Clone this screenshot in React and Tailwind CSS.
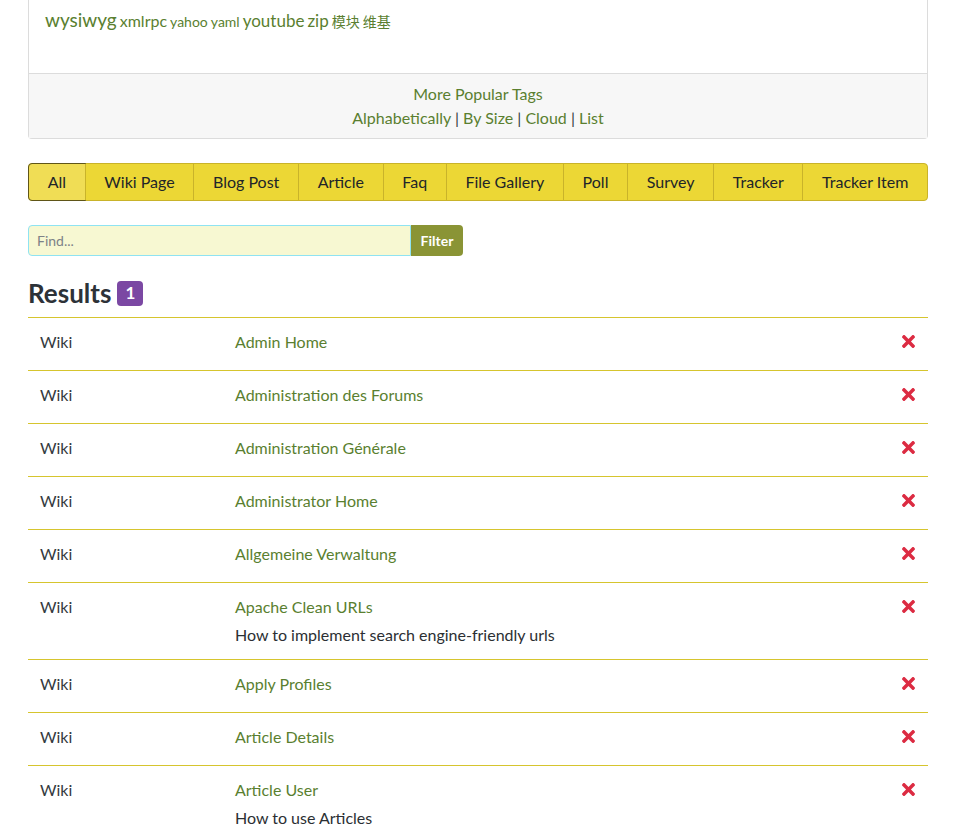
import React from 'react';

const tags = [
  { t: 'wysiwyg', s: 'text-[19px]' },
  { t: 'xmlrpc', s: 'text-[16px]' },
  { t: 'yahoo', s: 'text-[14px]' },
  { t: 'yaml', s: 'text-[14px]' },
  { t: 'youtube', s: 'text-[17px]' },
  { t: 'zip', s: 'text-[17px]' },
  { t: '模块', s: 'text-[14px]' },
  { t: '维基', s: 'text-[14px]' },
];

const tabs = ['All', 'Wiki Page', 'Blog Post', 'Article', 'Faq', 'File Gallery', 'Poll', 'Survey', 'Tracker', 'Tracker Item'];

const results = [
  { title: 'Admin Home' },
  { title: 'Administration des Forums' },
  { title: 'Administration Générale' },
  { title: 'Administrator Home' },
  { title: 'Allgemeine Verwaltung' },
  { title: 'Apache Clean URLs', desc: 'How to implement search engine-friendly urls' },
  { title: 'Apply Profiles' },
  { title: 'Article Details' },
  { title: 'Article User', desc: 'How to use Articles' },
];

function TimesIcon() {
  return (
    <svg viewBox="0 80 352 352" className="w-[13px] h-[13px]" fill="#dc2b42">
      <path d="M242.72 256l100.07-100.07c12.28-12.28 12.28-32.19 0-44.48l-22.24-22.24c-12.28-12.28-32.19-12.28-44.48 0L176 189.28 75.93 89.21c-12.28-12.28-32.19-12.28-44.48 0L9.21 111.45c-12.28 12.28-12.28 32.19 0 44.48L109.28 256 9.21 356.07c-12.28 12.28-12.28 32.19 0 44.48l22.24 22.24c12.28 12.28 32.2 12.28 44.48 0L176 322.72l100.07 100.07c12.28 12.28 32.2 12.28 44.48 0l22.24-22.24c12.28-12.28 12.28-32.19 0-44.48L242.72 256z" />
    </svg>
  );
}

export default function App() {
  return (
    <div className="min-h-[832px] bg-white text-[#343a40] text-base leading-6" style={{ fontFamily: 'Lato, "Noto Sans CJK SC", sans-serif' }}>
      <div className="mx-[28px] w-[900px] pb-10">
        {/* tag cloud card, scrolled so its top is off screen */}
        <div className="border-x border-b border-[#dcdcdc] rounded-b">
          <div className="h-[73px] px-4 pt-[6px] text-[#5a7f30] leading-7">
            {tags.map((x, i) => (
              <span key={x.t} className={x.s + (i > 0 ? ' ml-[3px]' : '')}>
                {x.t}
              </span>
            ))}
          </div>
          <div className="border-t border-[#dcdcdc] bg-[#f7f7f7] py-2 text-center text-[#5a7f30]">
            <div>More Popular Tags</div>
            <div>
              <span>Alphabetically</span>
              <span className="text-[#343a40]"> | </span>
              <span>By Size</span>
              <span className="text-[#343a40]"> | </span>
              <span>Cloud</span>
              <span className="text-[#343a40]"> | </span>
              <span>List</span>
            </div>
          </div>
        </div>

        {/* type tabs */}
        <div className="mt-[24px] flex rounded border border-[#c9b32a] bg-[#ecd735]">
          {tabs.map((t, i) => (
            <div
              key={t}
              className={
                i === 0
                  ? 'flex-auto text-center px-[17px] py-1.5 -m-px border border-[#5f5518] rounded-l bg-[#f0dd55] text-[#212529]'
                  : 'flex-auto text-center px-[17px] py-1.5 border-l border-[#c9b32a] text-[#212529]'
              }
            >
              {t}
            </div>
          ))}
        </div>

        {/* find */}
        <div className="mt-[24px] flex w-[435px] h-[31px]">
          <div className="flex-1 flex items-center border border-[#8fe3f2] rounded-l bg-[#f7f8d2] px-2 text-[14px] text-[#7d8287]">
            Find...
          </div>
          <div className="w-[52px] flex items-center justify-center rounded-r bg-[#8a9435] text-white text-[14px] font-bold">
            Filter
          </div>
        </div>

        {/* results */}
        <div className="mt-[22px] flex items-center gap-[6px]">
          <h2 className="text-[26px] font-bold leading-[30px] text-[#2d3238]">Results</h2>
          <span className="w-[26px] h-[25px] flex items-center justify-center rounded bg-[#7b48a3] text-white font-bold text-[17px]">1</span>
        </div>
        <div className="mt-[9px] border-t border-[#d6c52e]">
          {results.map((r) => (
            <div key={r.title} className="grid grid-cols-[195px_1fr_auto] border-b border-[#d6c52e] py-3">
              <div className="px-3">Wiki</div>
              <div className="px-3">
                <div className="mb-1 text-[#5a7f30]">{r.title}</div>
                {r.desc && <div className="text-[#2b2f33]">{r.desc}</div>}
              </div>
              <div className="pr-[13px] pt-[5px]">
                <TimesIcon />
              </div>
            </div>
          ))}
        </div>
      </div>
    </div>
  );
}
